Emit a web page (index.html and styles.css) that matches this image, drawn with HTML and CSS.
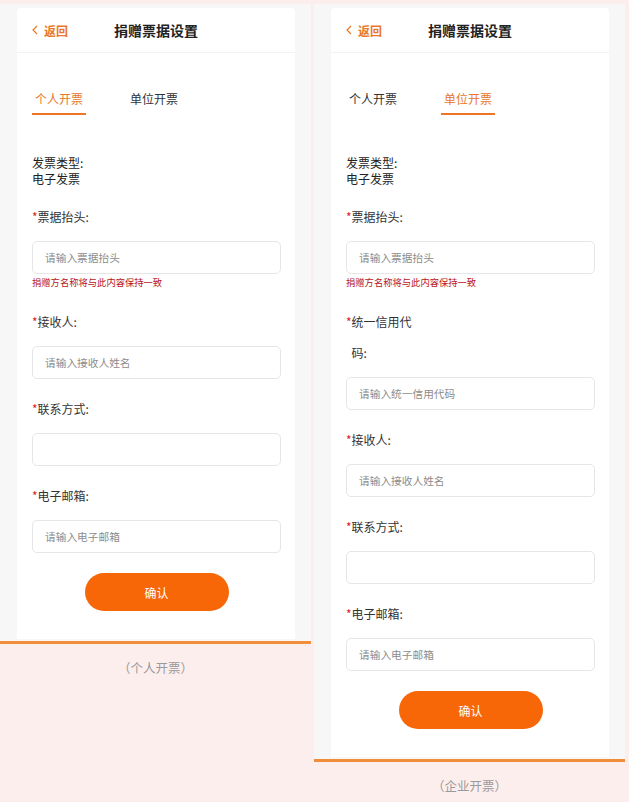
FILE: index.html
```html
<!DOCTYPE html>
<html lang="zh-CN">
<head>
  <meta charset="UTF-8">
  <title>捐赠票据设置</title>
  <link rel="stylesheet" href="styles.css">
</head>

<body>
  <div class="board">
    <!-- 个人开票 -->
    <div class="shot">
      <div class="frame">
        <div class="page">
          <div class="bar">
            <a class="back" href="javascript:">
              <svg width="6" height="10" viewBox="0 0 6 10"><polyline points="5,1 1,5 5,9" fill="none" stroke="#e8772a" stroke-width="1.2"/></svg>
              返回
            </a>
            <h3>捐赠票据设置</h3>
            <span></span>
          </div>
          <ul class="tabs">
            <li><a class="active" href="javascript:">个人开票</a></li>
            <li><a href="javascript:">单位开票</a></li>
          </ul>
          <div class="form">
            <p class="type">发票类型:<br>电子发票</p>
            <div class="field">
              <label><i>*</i><span>票据抬头:</span></label>
              <input type="text" placeholder="请输入票据抬头">
              <p class="hint">捐赠方名称将与此内容保持一致</p>
            </div>
            <div class="field">
              <label><i>*</i><span>接收人:</span></label>
              <input type="text" placeholder="请输入接收人姓名">
            </div>
            <div class="field">
              <label><i>*</i><span>联系方式:</span></label>
              <input type="text">
            </div>
            <div class="field">
              <label><i>*</i><span>电子邮箱:</span></label>
              <input type="text" placeholder="请输入电子邮箱">
            </div>
            <button class="btn">确认</button>
          </div>
        </div>
      </div>
      <p class="caption">（个人开票）</p>
    </div>

    <!-- 企业开票 -->
    <div class="shot">
      <div class="frame">
        <div class="page">
          <div class="bar">
            <a class="back" href="javascript:">
              <svg width="6" height="10" viewBox="0 0 6 10"><polyline points="5,1 1,5 5,9" fill="none" stroke="#e8772a" stroke-width="1.2"/></svg>
              返回
            </a>
            <h3>捐赠票据设置</h3>
            <span></span>
          </div>
          <ul class="tabs">
            <li><a href="javascript:">个人开票</a></li>
            <li><a class="active" href="javascript:">单位开票</a></li>
          </ul>
          <div class="form">
            <p class="type">发票类型:<br>电子发票</p>
            <div class="field">
              <label><i>*</i><span>票据抬头:</span></label>
              <input type="text" placeholder="请输入票据抬头">
              <p class="hint">捐赠方名称将与此内容保持一致</p>
            </div>
            <div class="field">
              <label><i>*</i><span>统一信用代码:</span></label>
              <input type="text" placeholder="请输入统一信用代码">
            </div>
            <div class="field">
              <label><i>*</i><span>接收人:</span></label>
              <input type="text" placeholder="请输入接收人姓名">
            </div>
            <div class="field">
              <label><i>*</i><span>联系方式:</span></label>
              <input type="text">
            </div>
            <div class="field">
              <label><i>*</i><span>电子邮箱:</span></label>
              <input type="text" placeholder="请输入电子邮箱">
            </div>
            <button class="btn">确认</button>
          </div>
        </div>
      </div>
      <p class="caption">（企业开票）</p>
    </div>
  </div>
</body>

</html>
```

FILE: styles.css
```css
* {
  margin: 0;
  padding: 0;
  box-sizing: border-box;
}

body {
  background: #fdeeee;
  font-family: "Noto Sans CJK SC", "Noto Sans", sans-serif;
  color: #333;
}

.board {
  display: flex;
  align-items: flex-start;
  gap: 3px;
  padding: 4px 0 0 0;
}

.shot {
  width: 311px;
}

.frame {
  background: #f7f7f7;
  padding: 4px 16px 2px 17px;
  border-bottom: 3px solid #f28d3c;
}

.page {
  background: #fff;
  border-radius: 4px 4px 0 0;
}

.caption {
  text-align: center;
  font-size: 12.5px;
  line-height: 16px;
  color: #9a9a9a;
  margin-top: 16px;
}

/* 顶部导航 */
.bar {
  height: 45px;
  display: grid;
  grid-template-columns: 1fr auto 1fr;
  align-items: center;
  padding: 0 15px;
  border-bottom: 1px solid #f3f3f3;
}

.bar h3 {
  font-size: 14px;
  font-weight: bold;
  color: #222;
}

.back {
  display: flex;
  align-items: center;
  gap: 6px;
  text-decoration: none;
  font-size: 12px;
  font-weight: bold;
  color: #e8772a;
}

/* tab */
.tabs {
  list-style: none;
  display: flex;
  gap: 41px;
  padding-left: 15px;
  margin-top: 36px;
}

.tabs li a {
  display: block;
  padding: 0 3px 4px;
  font-size: 12px;
  line-height: 20px;
  text-decoration: none;
  color: #333;
  border-bottom: 2px solid transparent;
}

.tabs li a.active {
  color: #e8772a;
  border-color: #ec7624;
}

/* 表单 */
.form {
  padding: 40px 14px 28px 15px;
}

.type {
  font-size: 12px;
  line-height: 16px;
  color: #222;
  margin-bottom: 14px;
}

.field {
  margin-bottom: 14px;
}

.field label {
  display: flex;
  font-size: 12px;
  line-height: 31px;
  color: #333;
}

.field label i {
  font-style: normal;
  color: #e02020;
}

.field label span {
  max-width: 62px;
}

.field input {
  display: block;
  width: 100%;
  height: 33px;
  margin-top: 9px;
  padding: 0 12px;
  border: 1px solid #e6e6e6;
  border-radius: 5px;
  outline: none;
  font-family: inherit;
  font-size: 10.7px;
  color: #333;
}

.field input::placeholder {
  color: #8c8c8c;
}

.hint {
  font-size: 9.3px;
  line-height: 12px;
  color: #b8141a;
  margin-top: 2px;
  padding-bottom: 4px;
}

.btn {
  display: block;
  width: 144px;
  height: 38px;
  margin: 20px auto 0;
  border: 0;
  border-radius: 19px;
  background: #f76707;
  color: #fff;
  font-family: inherit;
  font-size: 12px;
}
```
